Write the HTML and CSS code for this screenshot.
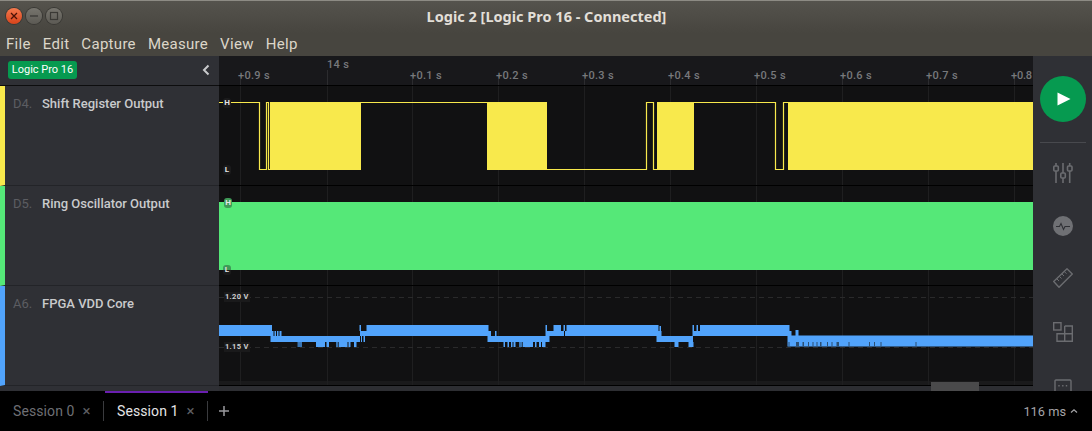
FILE: index.html
```html
<!DOCTYPE html>
<html lang="en">
<head>
    <meta charset="UTF-8">
    <meta name="viewport" content="width=device-width, initial-scale=1.0">
    <title>Logic 2</title>
    <link rel="stylesheet" href="styles.css">
</head>
<body>

<header class="titlebar">
    <div class="winButtons">
        <span class="winBtn closeBtn">
            <svg width="16" height="16" viewBox="0 0 16 16"><path d="M5 5l6 6M11 5l-6 6" stroke="#4a1206" stroke-width="1.3"/></svg>
        </span>
        <span class="winBtn">
            <svg width="16" height="16" viewBox="0 0 16 16"><path d="M4 8h8" stroke="#3a3935" stroke-width="1.3"/></svg>
        </span>
        <span class="winBtn">
            <svg width="16" height="16" viewBox="0 0 16 16"><rect x="4.5" y="4.5" width="7" height="7" fill="none" stroke="#3a3935" stroke-width="1.2"/></svg>
        </span>
    </div>
    <div class="windowTitle">Logic 2 [Logic Pro 16 - Connected]</div>
</header>

<nav class="menubar">
    <span>File</span>
    <span>Edit</span>
    <span>Capture</span>
    <span>Measure</span>
    <span>View</span>
    <span>Help</span>
</nav>

<main class="workspace">
    <section class="channels">
        <div class="deviceRow">
            <span class="deviceBadge">Logic Pro 16</span>
            <svg class="collapseIcon" width="10" height="14" viewBox="0 0 10 14"><path d="M7.5 2.5L3 7l4.500 4.500" fill="none" stroke="#c9cacc" stroke-width="2"/></svg>
        </div>
        <div class="channel yellowChannel">
            <span class="channelId">D4.</span>
            <span class="channelName">Shift Register Output</span>
        </div>
        <div class="channel greenChannel">
            <span class="channelId">D5.</span>
            <span class="channelName">Ring Oscillator Output</span>
        </div>
        <div class="channel blueChannel">
            <span class="channelId">A6.</span>
            <span class="channelName">FPGA VDD Core</span>
        </div>
    </section>

    <section class="timeline">
        <div class="ruler">
            <svg class="rulerMarks" viewBox="219 56 814 29" width="814" height="29">
                <path d="M240.500 79v6M327.500 70v15M412.500 79v6M498.500 79v6M584.500 79v6M670.500 79v6M756.500 79v6M842.500 79v6M928.500 79v6M1014.500 79v6"/>
            </svg>
            <span class="tick mainTick">14 s</span>
            <span class="tick t09">+0.9 s</span>
            <span class="tick t1">+0.1 s</span>
            <span class="tick t2">+0.2 s</span>
            <span class="tick t3">+0.3 s</span>
            <span class="tick t4">+0.4 s</span>
            <span class="tick t5">+0.5 s</span>
            <span class="tick t6">+0.6 s</span>
            <span class="tick t7">+0.7 s</span>
            <span class="tick t8">+0.8</span>
        </div>

        <div class="track">
            <svg class="wave" viewBox="219 86 814 99" width="814" height="99">
                <path class="grid" d="M240.500 85v100M327.500 85v100M412.500 85v100M498.500 85v100M584.500 85v100M670.500 85v100M756.500 85v100M842.500 85v100M928.500 85v100M1014.500 85v100"/>
                <path class="digitalLine" d="M219 102.500H259.500V169.500H266.500V102.500H268.500V169.500H271M361 102.500H487M547 169.500H646.500V102.500H653.500V169.500H657M694 102.500H775.500V169.500H783.500V102.500H788"/>
                <path class="digitalFill" d="M270 102h91v68h-91zM487 102h60v68h-60zM657 102h37v68h-37zM788 102h245v68h-245z"/>
            </svg>
            <span class="levelChip chipHigh">H</span>
            <span class="levelChip chipLow">L</span>
        </div>

        <div class="track">
            <svg class="wave" viewBox="219 186 814 99" width="814" height="99">
                <path class="grid" d="M240.500 185v100M327.500 185v100M412.500 185v100M498.500 185v100M584.500 185v100M670.500 185v100M756.500 185v100M842.500 185v100M928.500 185v100M1014.500 185v100"/>
                <rect x="219" y="202" width="814" height="68" fill="#55e878"/>
            </svg>
            <span class="levelChip chipHigh onGreen">H</span>
            <span class="levelChip chipLow onGreen">L</span>
        </div>

        <div class="track">
            <svg class="wave" viewBox="219 286 814 99" width="814" height="99">
                <rect x="219" y="381" width="814" height="4" fill="#1a1a1b"/>
                <path class="grid" d="M240.500 285v100M327.500 285v100M412.500 285v100M498.500 285v100M584.500 285v100M670.500 285v100M756.500 285v100M842.500 285v100M928.500 285v100M1014.500 285v100"/>
                <path class="voltLine" d="M219 297.500H1033M219 347.500H1033"/>
                <!-- analog envelope, one rect per step -->
                <path class="analogFill" d="M219 325h53v11h-53z
                    M272 331h1.500v5h-1.500zM274.500 331h1.500v5h-1.500zM277 331h1.500v5h-1.500zM279.500 331h2v5h-2z
                    M270.500 336h89.500v6h-89.500z
                    M316 342h9v5h-9zM326.500 342h2.500v5h-2.500zM339 342h8.500v5h-8.500zM348.500 342h2v5h-2zM354 342h2.500v5h-2.500z
                    M360 331h7v5h-7zM359.500 325h1.500v6h-1.500zM361 336h1v6h-1zM363.500 336h1.500v6h-1.500z
                    M366.500 325h122v11h-122z
                    M488 331h3v5h-3zM495 331h1.500v5h-1.500z
                    M487.500 336h58v6h-58z
                    M503.500 342h1.500v5h-1.500zM507.500 342h1.500v5h-1.500zM511 342h1.500v5h-1.500zM513.500 342h2v5h-2zM523 342h10v5h-10zM535 342h1.500v5h-1.500zM539 342h2v5h-2zM542 342h3.500v5h-3.500z
                    M545.500 331h4v11h-4zM545.500 325h1.500v6h-1.500z
                    M549 331h4.500v5h-4.500zM553.500 325h7.500v11h-7.500zM561 331h3v5h-3zM563.500 325h1.500v6h-1.500zM566.500 325h3v6h-3zM565 331h4v5h-4z
                    M568.500 325h90v11h-90z
                    M658 331h3.500v5h-3.500zM659.500 326h1.500v5h-1.500z
                    M656.500 336h36.500v6h-36.500z
                    M674.500 342h4v5h-4zM688.500 342h5v5h-5z
                    M692.500 331h8v5h-8zM692.500 325h1.500v6h-1.500zM696.500 325h1.500v6h-1.500z
                    M700 325h89.500v11h-89.500z
                    M789 331h2.500v5h-2.500zM795.500 330h3v6h-3z
                    M787.500 335.500h245.500v11h-245.500z"/>
                <path class="analogNotch" d="M297.500 342h4.500v5h-4.500zM336 342h2.500v5h-2.500zM519 342h3.500v5h-3.500z"/>
                <path class="analogGap" d="M788.500 342h1v4.500h-1zM796 342h3v4.500h-3zM802.500 342h1.500v4.500h-1.500zM808 342h1v4.500h-1zM812.500 342h1v4.500h-1zM816.500 342h1v4.500h-1zM820 342h1.500v4.500h-1.500zM827 342h1v4.500h-1zM831.500 342h1v4.500h-1zM836.500 342h2.500v4.500h-2.500zM848.500 342h1v4.500h-1zM869 342h1v4.500h-1zM874 342h1v4.500h-1zM880.500 342h1v4.500h-1zM915.500 342h1v4.500h-1z"/>
            </svg>
            <span class="voltLabel volt120">1.20 V</span>
            <span class="voltLabel volt115">1.15 V</span>
        </div>

        <div class="scrollTrack">
            <span class="scrollThumb"></span>
        </div>
    </section>

    <aside class="tools">
        <div class="playBtn">
            <svg width="14" height="16" viewBox="0 0 14 16"><path d="M0.500 1.500L13.500 8L0.500 14.500z" fill="#fff"/></svg>
        </div>
        <div class="toolsDivider"></div>
        <svg class="toolIcon sliders" width="20" height="20" viewBox="0 0 20 20">
            <path d="M3 0v3M3 8v12M10 0v10M10 15v5M16.700 0v3M16.700 8v12" fill="none"/>
            <rect x="0.800" y="3" width="4.500" height="5" rx="1" fill="none"/>
            <rect x="7.800" y="10" width="4.500" height="5" rx="1" fill="none"/>
            <rect x="14.500" y="3" width="4.500" height="5" rx="1" fill="none"/>
        </svg>
        <svg class="analyzerIcon" width="20" height="20" viewBox="0 0 20 20">
            <circle cx="10" cy="10" r="10" fill="#6f7074"/>
            <path d="M3 10.500h3.500l1.500-3 2.500 6 1.500-3h5" fill="none" stroke="#2f3035" stroke-width="1.100"/>
        </svg>
        <svg class="toolIcon rulerIcon" width="20" height="20" viewBox="0 0 20 20">
            <path d="M0.700 13.500L14 0.800L19.300 6L6 19.300z" fill="none"/>
            <path d="M4 11l2 2M6.500 8.500l2 2M9 6l2 2M11.500 3.700l2 2" fill="none" stroke-width="1"/>
        </svg>
        <svg class="toolIcon blocksIcon" width="20" height="20" viewBox="0 0 20 20">
            <rect x="0.700" y="0.700" width="7.300" height="7.300" fill="none"/>
            <path d="M11.700 4h7.600v15.300H4v-7.600h15.300M11.700 4v15.300" fill="none"/>
        </svg>
        <svg class="toolIcon chatIcon" width="18" height="14" viewBox="0 0 18 14">
            <path d="M2 1h14a1 1 0 0 1 1 1v12H1V2a1 1 0 0 1 1-1z" fill="none"/>
            <path d="M5 6v1.500M8.800 6v1.500M12.500 6v1.500" fill="none"/>
        </svg>
    </aside>
</main>

<footer class="tabbar">
    <div class="tab">
        <span class="tabName">Session 0</span>
        <span class="tabClose">&times;</span>
    </div>
    <div class="tab activeTab">
        <span class="tabName">Session 1</span>
        <span class="tabClose">&times;</span>
    </div>
    <svg class="addTab" width="12" height="12" viewBox="0 0 12 12"><path d="M6 1v10M1 6h10" stroke="#9a9a9e" stroke-width="1.500"/></svg>
    <div class="timing">
        116 ms
        <svg width="8" height="6" viewBox="0 0 8 6"><path d="M1 4.500L4 1.800L7 4.500" fill="none" stroke="#a5a5a8" stroke-width="1.200"/></svg>
    </div>
</footer>

</body>
</html>
```

FILE: styles.css
```css
* {
    box-sizing: border-box;
}
html, body {
    height: 100%;
}
body {
    margin: 0;
    width: 1092px;
    height: 431px;
    overflow: hidden;
    background-color: #000;
    font-family: Roboto, sans-serif;
    display: flex;
    flex-direction: column;
}

/* window chrome */
.titlebar {
    height: 33px;
    flex: none;
    display: flex;
    align-items: center;
    justify-content: center;
    position: relative;
    border-top: 1px solid #8d8b84;
    background: linear-gradient(to bottom, #55534d, #47453f);
}
.winButtons {
    position: absolute;
    left: 6px;
    top: 7px;
    display: flex;
    gap: 4px;
}
.winBtn {
    width: 16px;
    height: 16px;
    border-radius: 50%;
    background: linear-gradient(to bottom, #77756e, #5c5a54);
    box-shadow: 0 0 0 1px #3a3935;
    display: block;
}
.winBtn svg {
    display: block;
}
.closeBtn {
    background: linear-gradient(to bottom, #f47a4e, #d9431a);
}
.windowTitle {
    font-family: "Noto Sans", sans-serif;
    font-weight: 700;
    font-size: 14.500px;
    color: #e2dfd8;
    margin-top: -2px;
    margin-left: 1px;
}
.menubar {
    height: 23px;
    flex: none;
    display: flex;
    align-items: flex-start;
    gap: 12px;
    padding-left: 6px;
    background: #47453f;
    color: #dcd6c9;
    font-size: 15px;
    letter-spacing: 0.300px;
    line-height: 22px;
}

/* main area */
.workspace {
    height: 335px;
    flex: none;
    display: flex;
}
.channels {
    width: 219px;
    flex: none;
    background-color: #2f3035;
    display: flex;
    flex-direction: column;
}
.deviceRow {
    height: 30px;
    flex: none;
    display: flex;
    align-items: center;
    justify-content: space-between;
    padding: 0 8px;
    border-bottom: 1px solid #0d0d0e;
}
.deviceBadge {
    background-color: #069a50;
    color: #fff;
    font-size: 11px;
    line-height: 18px;
    height: 18px;
    width: 69px;
    text-align: center;
    border-radius: 3px;
    margin-top: -1px;
}
.collapseIcon {
    margin-top: -1px;
}
.channel {
    height: 100px;
    flex: none;
    display: flex;
    align-items: flex-start;
    padding: 10px 0 0 8px;
    border-left: 5px solid #000;
    border-bottom: 1px solid #232428;
    font-size: 13px;
    line-height: 16px;
}
.yellowChannel {
    border-left-color: #f8e94c;
}
.greenChannel {
    border-left-color: #55e878;
}
.blueChannel {
    border-left-color: #51a3fb;
}
.channelId {
    width: 29px;
    flex: none;
    color: #5c5d62;
}
.channelName {
    color: #c9cacc;
    font-weight: 500;
}

.timeline {
    width: 814px;
    flex: none;
    position: relative;
    background-color: #111112;
    display: flex;
    flex-direction: column;
    overflow: hidden;
}
.ruler {
    height: 30px;
    flex: none;
    position: relative;
    background-color: #18181b;
    border-bottom: 1px solid #000;
}
.rulerMarks {
    display: block;
    stroke: #2c2c2f;
    stroke-width: 1;
    fill: none;
}
.tick {
    position: absolute;
    top: 13px;
    font-size: 11px;
    font-weight: 500;
    line-height: 13px;
    letter-spacing: 0.300px;
    color: #77787c;
    white-space: nowrap;
}
.mainTick { left: 108px; top: 2px; }
.t09 { left: 19px; }
.t1 { left: 191px; }
.t2 { left: 277px; }
.t3 { left: 363px; }
.t4 { left: 449px; }
.t5 { left: 535px; }
.t6 { left: 621px; }
.t7 { left: 707px; }
.t8 { left: 792px; letter-spacing: -0.200px; }

.track {
    height: 100px;
    flex: none;
    position: relative;
    border-bottom: 1px solid #000;
}
.wave {
    display: block;
}
.grid {
    stroke: #1f1f20;
    stroke-width: 1;
    fill: none;
}
.digitalLine {
    stroke: #f8e94c;
    stroke-width: 1.200;
    fill: none;
}
.digitalFill {
    fill: #f8e94c;
}
.voltLine {
    stroke: #2a2a2b;
    stroke-width: 1;
    stroke-dasharray: 5 4;
    fill: none;
}
.analogFill {
    fill: #51a3fb;
}
.analogNotch {
    fill: #3a76b4;
}
.analogGap {
    fill: #2c4f73;
}
.levelChip {
    position: absolute;
    left: 4px;
    width: 8px;
    height: 10px;
    font-size: 8px;
    font-weight: 700;
    line-height: 10px;
    text-align: center;
    color: #e6e6e6;
    background-color: #1b1b1c;
    border-radius: 3px;
}
.chipHigh {
    top: 12px;
}
.chipLow {
    top: 79px;
}
.onGreen {
    background-color: #3f9a58;
}
.onGreen.chipHigh {
    top: 12px;
    left: 5px;
}
.onGreen.chipLow {
    top: 79px;
    background: linear-gradient(to bottom, #3f9a58 50%, #1b1b1c 50%);
}
.voltLabel {
    position: absolute;
    left: 5px;
    font-size: 7.500px;
    font-weight: 700;
    line-height: 10px;
    letter-spacing: 0.300px;
    color: #d0d0d0;
    background-color: #1a1a1b;
    padding: 0 1px;
}
.volt120 { top: 6px; }
.volt115 { top: 56px; }

.scrollTrack {
    height: 5px;
    flex: none;
    position: relative;
    background-color: #2d2e32;
}
.scrollThumb {
    position: absolute;
    left: 712px;
    top: -4px;
    width: 48px;
    height: 9px;
    background-color: #4a4a4b;
}

/* right tool strip */
.tools {
    width: 59px;
    flex: none;
    background-color: #2f3035;
    display: flex;
    flex-direction: column;
    align-items: center;
    overflow: hidden;
    padding-top: 20px;
}
.playBtn {
    width: 46px;
    height: 46px;
    flex: none;
    border-radius: 50%;
    background-color: #069a50;
    display: flex;
    align-items: center;
    justify-content: center;
    padding-left: 2px;
}
.toolsDivider {
    width: 46px;
    height: 1px;
    flex: none;
    margin-top: 20px;
    background-color: #48494e;
}
.toolIcon, .analyzerIcon {
    flex: none;
    display: block;
}
.toolIcon {
    stroke: #6b6c70;
    stroke-width: 1.400;
}
.sliders {
    margin-top: 20px;
    stroke-width: 1.600;
}
.analyzerIcon {
    margin-top: 33px;
}
.rulerIcon {
    margin-top: 32px;
}
.blocksIcon {
    margin-top: 34px;
}
.chatIcon {
    margin-top: 37px;
}

/* session tabs */
.tabbar {
    height: 40px;
    flex: none;
    display: flex;
    align-items: center;
    background-color: #000;
    font-size: 14px;
    color: #6e6f74;
    letter-spacing: 0.100px;
}
.tab {
    height: 40px;
    width: 104px;
    display: flex;
    align-items: center;
    gap: 8px;
    padding-left: 13px;
    position: relative;
}
.tab::after {
    content: "";
    position: absolute;
    right: 0;
    top: 10px;
    height: 20px;
    width: 1px;
    background-color: #3a3b3e;
}
.activeTab {
    width: 103px;
    margin-left: 1px;
    padding-left: 12px;
    color: #e4e4e6;
    border-top: 2px solid #6a1fb0;
    padding-bottom: 2px;
}
.activeTab::after {
    top: 8px;
}
.tabClose {
    font-size: 15px;
    color: #5e5f63;
}
.addTab {
    margin-left: 10px;
}
.timing {
    margin-left: auto;
    margin-right: 14px;
    display: flex;
    align-items: center;
    gap: 4px;
    font-size: 12.800px;
    letter-spacing: 0;
    color: #a5a5a8;
}
```
